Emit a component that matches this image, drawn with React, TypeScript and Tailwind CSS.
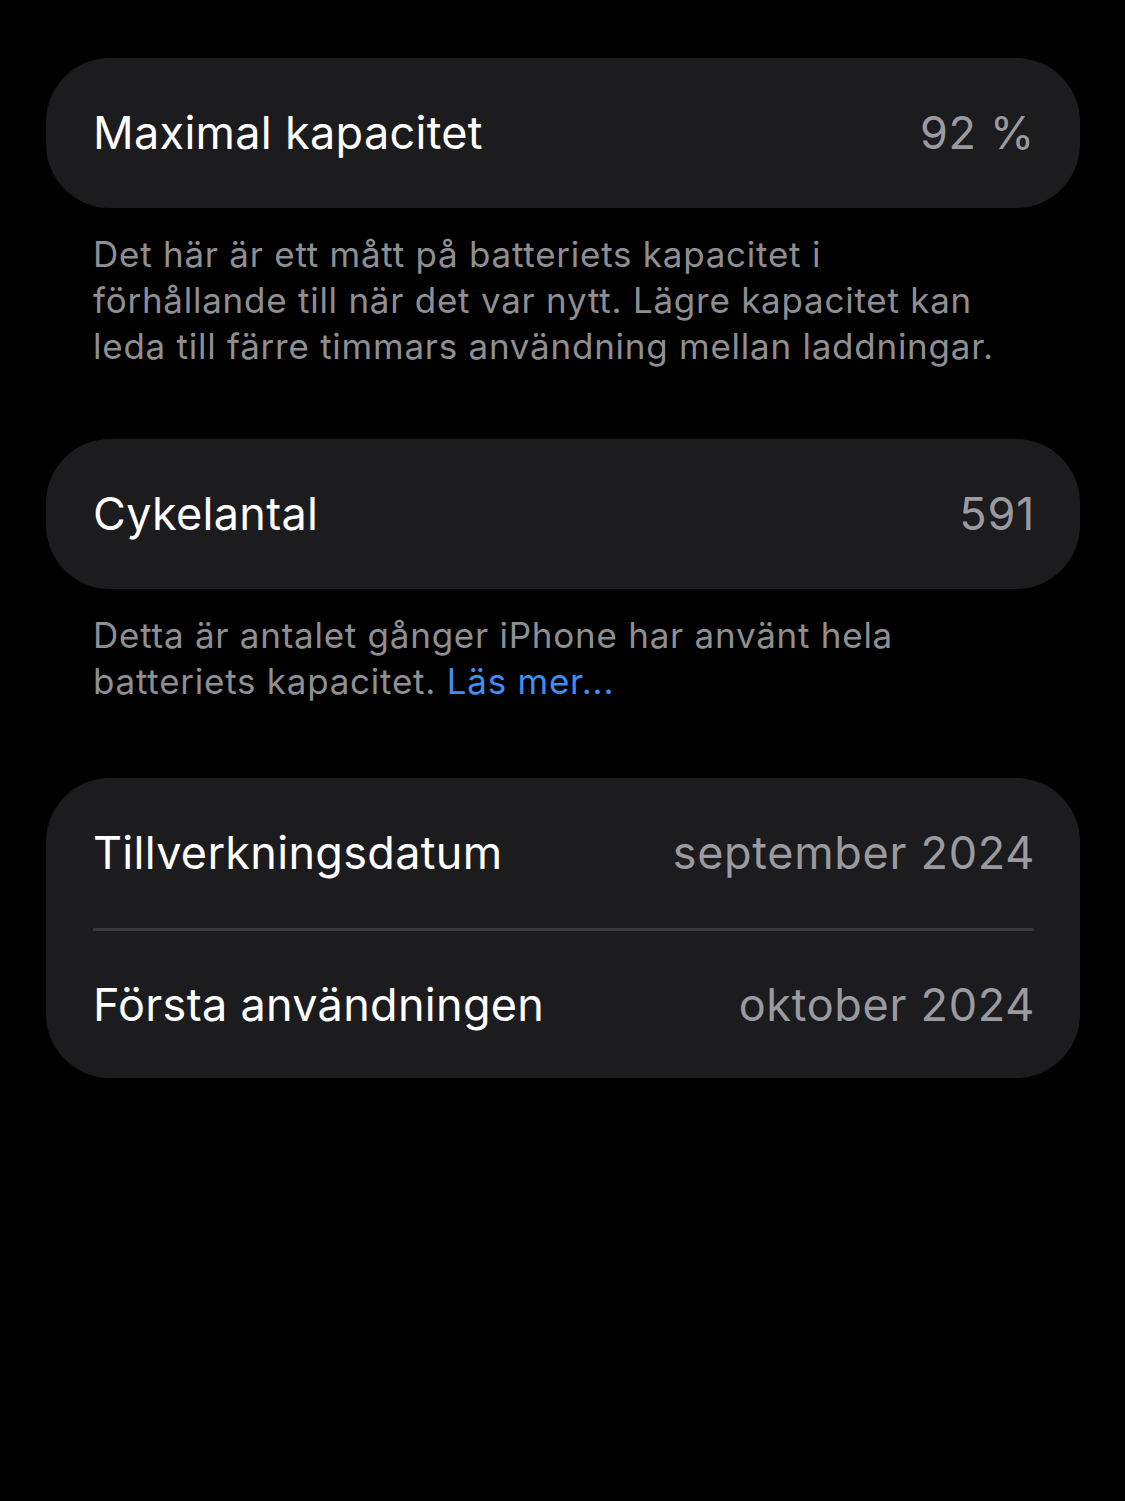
export default function App() {
  return (
    <div
      className="min-h-[1501px] w-full bg-black pl-[46px] pr-[45px] pt-[58px]"
      style={{ fontFamily: "Inter, 'Noto Sans', sans-serif" }}
    >
      <Card rows={[{ label: "Maximal kapacitet", value: "92 %" }]} />
      <Footer>
        Det här är ett mått på batteriets kapacitet i
        <br />
        förhållande till när det var nytt. Lägre kapacitet kan
        <br />
        leda till färre timmars användning mellan laddningar.
      </Footer>

      <div className="h-[70px]" />
      <Card rows={[{ label: "Cykelantal", value: "591" }]} />
      <Footer>
        Detta är antalet gånger iPhone har använt hela
        <br />
        batteriets kapacitet. <span className="text-[#3e8ff5]">Läs mer...</span>
      </Footer>

      <div className="h-[74px]" />
      <Card
        rows={[
          { label: "Tillverkningsdatum", value: "september 2024" },
          { label: "Första användningen", value: "oktober 2024" },
        ]}
      />
    </div>
  );
}

function Card({ rows }: { rows: { label: string; value: string }[] }) {
  return (
    <div className="rounded-[64px] bg-[#1c1c1e] pl-[47px] pr-[46px]">
      {rows.map((r, i) => (
        <div
          key={r.label}
          className={`flex h-[150px] items-center justify-between ${
            i > 0 ? "border-t-[3px] border-[#38383a]" : ""
          }`}
        >
          <span className="text-[45px] tracking-[0.3px] text-white">{r.label}</span>
          <span className="-mr-[1px] text-[45px] tracking-[0.7px] text-[#9a9aa0]">{r.value}</span>
        </div>
      ))}
    </div>
  );
}

function Footer({ children }: { children: React.ReactNode }) {
  return (
    <p className="mt-[23px] px-[47px] text-[35px] leading-[46px] tracking-[0.75px] text-[#8e8e93]">
      {children}
    </p>
  );
}
